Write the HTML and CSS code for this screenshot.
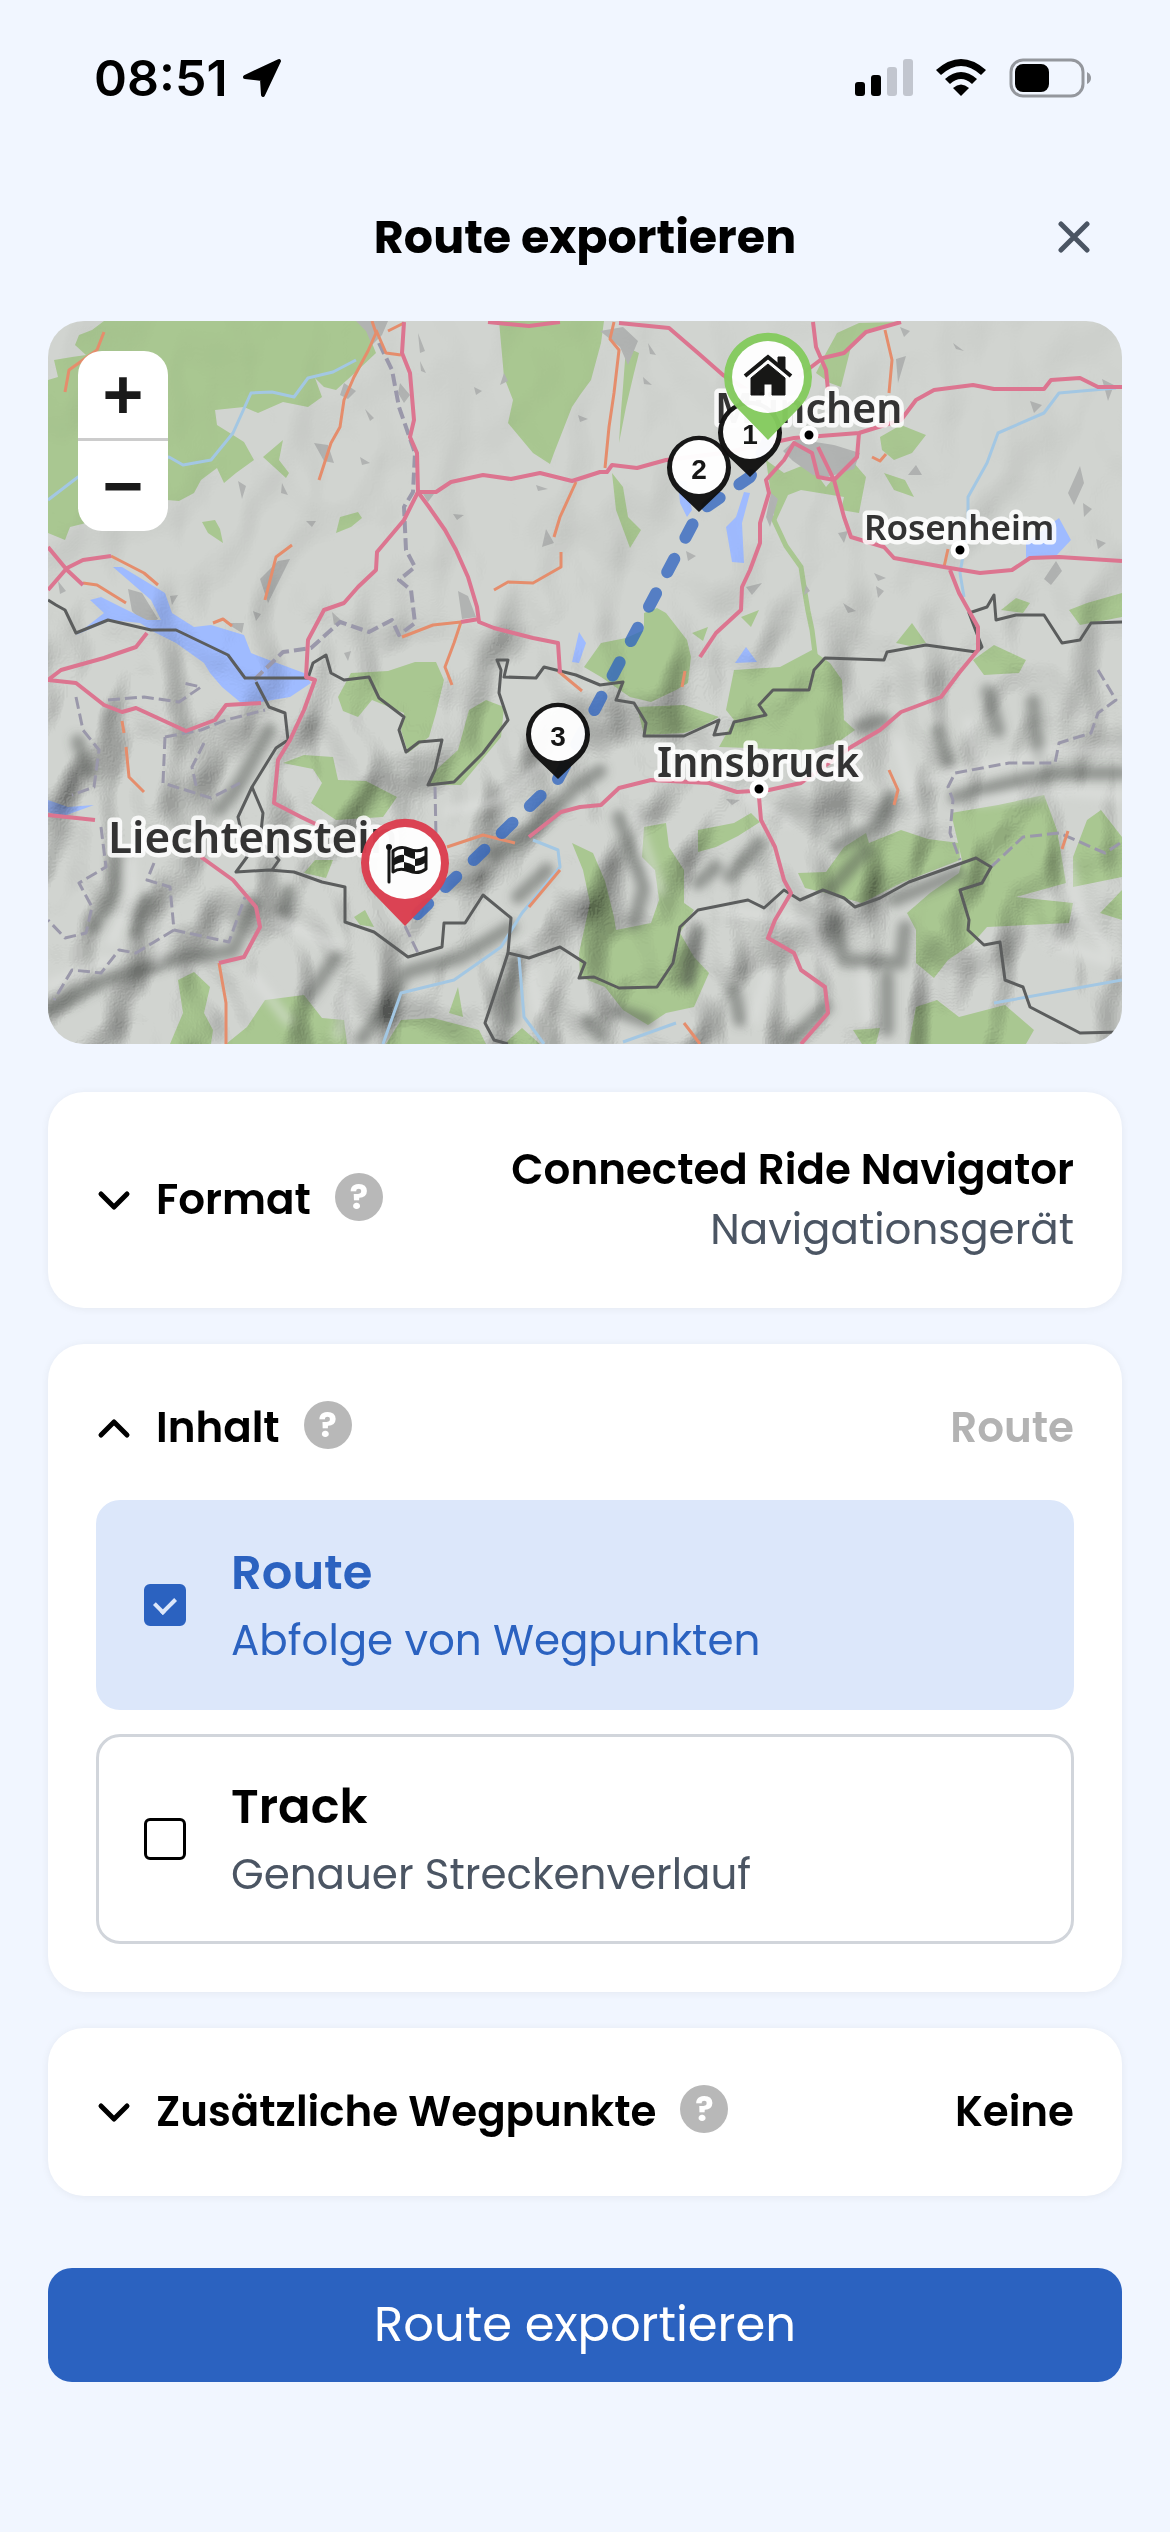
FILE: index.html
```html
<!DOCTYPE html>
<html lang="de">
<head>
    <meta charset="UTF-8">
    <meta name="viewport" content="width=device-width, initial-scale=1.0">
    <title>Route exportieren</title>
    <link rel="stylesheet" href="styles.css">
</head>
<body>
    <div class="status-bar">
        <div class="status-time">
            <span>08:51</span>
            <svg width="40" height="40" viewBox="0 0 40 40"><path d="M37 3 L21 37 L20 21 L3 19 Z" stroke="#000" stroke-width="4" stroke-linejoin="round"/></svg>
        </div>
        <div class="status-icons">
            <svg width="58" height="40" viewBox="0 0 58 40">
                <rect x="0" y="24" width="10" height="14" rx="3"/>
                <rect x="16" y="17" width="10" height="21" rx="3"/>
                <rect x="32" y="9" width="10" height="29" rx="3" fill="#c2c6cf"/>
                <rect x="48" y="1" width="10" height="37" rx="3" fill="#c2c6cf"/>
            </svg>
            <svg width="52" height="40" viewBox="0 0 52 40">
                <path d="M1 12 Q26 -10 51 12 L46 17 Q26 -1 6 17 Z"/>
                <path d="M10 21 Q26 7 42 21 L37 26 Q26 16 15 26 Z"/>
                <path d="M18 30 Q26 23 34 30 L26 38 Z"/>
            </svg>
            <svg width="83" height="40" viewBox="0 0 83 40">
                <rect x="2" y="2" width="72" height="36" rx="12" fill="none" stroke="#94979d" stroke-width="3"/>
                <rect x="6" y="6" width="34" height="28" rx="8"/>
                <path d="M78 14 Q82 16 82 20 Q82 24 78 26 Z" fill="#94979d"/>
            </svg>
        </div>
    </div>

    <div class="container">
        <header class="header">
            <h1>Route exportieren</h1>
            <button type="button" class="close" aria-label="Schließen">
                <svg width="32" height="32" viewBox="0 0 32 32"><path d="M3 3 L29 29 M29 3 L3 29" stroke="#4b5563" stroke-width="5" stroke-linecap="round"/></svg>
            </button>
        </header>

        <div class="map">
            <svg class="map-canvas" viewBox="0 0 1074 723">
                <defs>
                    <filter id="relief" x="0" y="0" width="100%" height="100%">
                        <feTurbulence type="fractalNoise" baseFrequency="0.015 0.010" numOctaves="2" seed="11"/>
                        <feColorMatrix values="0 0 0 0 0  0 0 0 0 0  0 0 0 0 0  1 0 0 0 0"/>
                        <feGaussianBlur stdDeviation="3"/>
                        <feDiffuseLighting surfaceScale="60" diffuseConstant="1.15" lighting-color="#ffffff">
                            <feDistantLight azimuth="225" elevation="60"/>
                        </feDiffuseLighting>
                    </filter>
                    <filter id="soft" x="-10%" y="-10%" width="120%" height="120%"><feGaussianBlur stdDeviation="5"/></filter>
                    <linearGradient id="fade" x1="0" y1="0" x2="0" y2="1">
                        <stop offset="0" stop-color="#fff" stop-opacity="0.04"/>
                        <stop offset="0.35" stop-color="#fff" stop-opacity="0.1"/>
                        <stop offset="0.55" stop-color="#fff" stop-opacity="0.5"/>
                        <stop offset="1" stop-color="#fff" stop-opacity="0.6"/>
                    </linearGradient>
                    <mask id="alps"><rect width="1074" height="723" fill="url(#fade)"/></mask>
                    <path id="pin-big" d="M0 63 L-31 31 A44 44 0 1 1 31 31 Z"/>
                    <path id="pin-small" d="M0 45 L-23 23 A32 32 0 1 1 23 23 Z"/>
                </defs>

                <rect width="1074" height="723" fill="#d1d4d0"/>

                <!-- Wald -->
                <g fill="#a9c791">
                    <path d="M56 0 L44 9 31 14 27 24 38 34 24 36 6 39 10 56 0 59 0 212 17 219 22 206 38 202 60 190 119 179 131 180 146 172 153 159 169 147 176 162 188 152 206 139 196 121 185 114 169 104 167 89 196 86 210 92 235 81 260 86 274 76 267 57 276 66 288 69 310 49 328 32 315 0Z"/>
                    <path d="M235 119 L215 136 226 146 238 157 241 152 231 139Z M154 201 L167 199 172 208 175 222 160 212Z M292 196 L310 191 314 197 303 206 288 212Z"/>
                    <path d="M451 0 L456 56 465 79 460 102 485 132 502 143 506 132 524 86 532 74 543 59 553 22 556 0Z"/>
                    <path d="M578 26 L591 32 586 52 578 86 571 122 573 90 575 66Z M564 152 L575 166 580 196 593 209 582 227 568 189Z"/>
                    <path d="M778 32 L789 12 811 2 850 1 818 9 803 26 793 66 782 62 768 52Z M832 116 L853 104 878 114 864 132 846 139 834 129Z M836 152 L857 159 866 176 846 169Z"/>
                    <path d="M718 139 L736 152 761 142 778 166 790 152 796 139 806 142 818 156 811 192 793 189 796 176 753 169 740 174 727 202 724 180Z"/>
                    <path d="M536 346 L553 322 578 317 596 309 596 292 609 287 618 292 639 319 643 336 640 362 628 369 603 381 582 376 553 356Z M589 386 L636 384 671 396 655 405 636 412 596 414Z"/>
                    <path d="M686 349 L732 346 764 329 782 342 794 359 796 399 807 409 789 422 761 429 671 426 686 399 678 389Z"/>
                    <path d="M693 296 L711 289 703 306Z M848 322 L864 302 878 322 862 325Z M925 339 L946 324 978 339 971 352 936 354Z M953 289 L968 277 982 282 975 292Z M1021 289 L1039 282 1074 272 1074 296 1032 304Z M644 312 L660 306 655 320Z"/>
                    <path d="M290 376 L303 352 340 350 367 341 388 341 396 359 388 392 381 416 360 432 353 409 356 392 324 379 310 396 295 390Z"/>
                    <path d="M421 389 L438 379 456 386 453 416 428 446 413 464 380 464 388 449 410 429Z M235 442 L256 434 285 436 290 459 318 460 349 476 335 496 288 499 263 482 274 462 265 448Z"/>
                    <path d="M267 539 L285 539 278 557 256 552Z M306 596 L317 589 326 606 312 604Z"/>
                    <path d="M130 659 L146 651 162 666 156 692 165 709 163 723 122 723 135 692Z M178 723 L199 706 217 679 256 674 274 697 296 699 299 723Z M401 692 L410 666 415 696Z M338 723 L353 699 385 697 431 709 438 723Z M456 723 L474 707 492 723Z"/>
                    <path d="M524 522 L545 532 557 560 566 596 568 609 603 602 611 579 607 549 594 536 596 506 618 502 621 526 636 549 636 582 646 589 632 612 646 636 661 652 646 686 618 692 600 704 575 689 557 666 532 656 531 632 542 582 535 549Z"/>
                    <path d="M650 509 L686 502 703 492 712 501 690 515 668 526 650 531Z M750 552 L778 551 796 526 818 512 821 522 853 509 880 518 911 522 912 539 853 562 814 582 778 572 757 567Z"/>
                    <path d="M903 492 L950 484 996 474 1009 509 1018 562 968 576 1025 582 1021 602 939 606 925 622 900 639 886 657 868 642 868 609 859 592 882 572 911 552 914 539Z"/>
                    <path d="M1025 536 L1039 499 1053 489 1074 516 1074 556 1025 566Z M1052 592 L1074 569 1074 599Z M861 723 L868 686 889 679 911 696 957 684 986 709 978 723Z M805 709 L832 707 828 723 814 723Z"/>
                </g>
                <path d="M724 195 L738 225 753 246 757 272 760 290 764 309 768 340" fill="none" stroke="#a9c791" stroke-width="5"/>

                <!-- Siedlungen -->
                <g fill="#b1b3b2">
                    <path d="M308 0 L340 0 334 14 324 24 318 10Z M370 12 L377 30 372 32Z M372 40 L378 52 373 50Z M352 62 L362 74 356 82 350 72Z M296 62 L308 70 300 78 292 74Z M317 88 L326 97 322 100Z M266 122 L280 124 286 142 276 140Z M312 136 L322 142 314 144Z M190 160 L198 165 194 178Z M234 162 L240 174 233 172Z M258 200 L268 200 264 206Z"/>
                    <path d="M426 66 L434 70 428 74Z M456 52 L460 60 452 64Z M530 94 L540 98 532 101Z M375 173 L386 173 380 181Z M488 164 L500 168 490 170Z M405 193 L416 194 409 199Z M498 208 L506 222 494 226Z M410 270 L420 275 428 296 414 298Z M230 240 L242 238 226 270 220 282 212 258Z M80 268 L94 272 110 298 98 304 84 290Z M178 302 L196 302 194 312Z M10 260 L18 270 12 273Z M122 275 L130 274 124 284Z M205 290 L213 293 208 300Z M284 291 L294 300 286 304Z M296 332 L303 330 300 340Z"/>
                    <path d="M552 10 L575 6 590 20 580 44 572 26Z M600 22 L608 34 602 33Z M595 56 L604 64 596 63Z M748 118 L786 124 812 132 806 148 780 156 765 154 745 140 735 130Z M848 38 L858 35 850 62Z M852 6 L862 10 856 16Z M905 22 L916 30 908 28Z M982 80 L994 84 986 92Z M1054 58 L1066 64 1060 80Z M1032 145 L1036 162 1026 184 1020 172Z M1035 182 L1044 188 1036 196Z M1048 218 L1058 222 1050 228Z M868 144 L874 154 860 154Z M790 212 L800 210 796 222Z M723 172 L730 178 722 206 718 196Z M698 266 L714 262 704 274Z M638 230 L648 235 640 240Z M758 264 L762 270 756 274Z M826 252 L838 257 830 260Z M828 265 L836 270 830 277Z M795 282 L808 290 800 292Z M1008 240 L1014 250 1003 264 996 258Z M678 478 L692 479 684 484Z"/>
                </g>

                <!-- Seen -->
                <g fill="#9fbbff">
                    <path d="M65 246 L74 246 117 272 124 292 146 306 163 304 196 314 203 332 221 339 256 352 263 362 242 376 213 381 192 381 174 366 162 352 156 342 128 322 106 311 92 302 63 299 28 314 56 292 42 279 53 276 99 299 113 299 103 279Z"/>
                    <path d="M696 171 L702 172 694 202 696 242 684 241 678 206 688 196Z M630 160 L638 160 644 189 639 196 632 182Z M978 222 L1011 197 1023 219 1007 236 978 237Z M687 342 L698 326 709 341Z M531 311 L538 322 531 342 524 341Z M0 479 L20 486 46 484 13 496 0 491Z"/>
                </g>

                <!-- Relief -->
                <g class="relief" mask="url(#alps)">
                    <rect x="-30" y="-30" width="1134" height="783" filter="url(#relief)"/>
                </g>
                <g fill="none" stroke="#4c4f4c" stroke-opacity="0.48" stroke-width="14" stroke-linecap="round" stroke-linejoin="round" filter="url(#soft)">
                    <path d="M0 689 L56 659 135 636 185 630 206 582 M69 536 L67 569 46 606 M99 579 L88 612 M221 409 L192 462 171 489 M288 636 L260 676 M463 606 L413 636 356 652 342 682 313 719"/>
                    <path d="M552 450 L528 466 488 506 405 562 M499 549 L470 576 M571 496 L596 566 586 602 M668 546 L650 562 M711 522 L682 556 M836 399 L811 406 M843 476 L828 506 789 526 M818 529 L782 569 M911 552 L846 579"/>
                    <path d="M907 476 L961 462 1003 452 1074 452 M786 599 L796 639 853 642 857 606 M686 669 L692 699 M839 656 L839 709 M778 686 L743 719 M466 640 L462 700 M650 610 L640 660 M600 700 L570 690 M240 570 L236 590 M540 700 L552 715 M30 420 L40 450 M940 370 L950 410 M890 410 L900 440 M985 380 L990 430"/>
                </g>
                <g fill="none" stroke="#e4e5e3" stroke-opacity="0.55" stroke-width="9" stroke-linecap="round" stroke-linejoin="round" filter="url(#soft)">
                    <path d="M82 540 L84 574 64 620 M120 600 L110 640 M0 665 L60 640 M228 600 L290 625 M205 655 L240 700 M300 670 L290 715 M380 570 L440 540 M480 620 L490 690 M400 490 L450 480 500 440 M585 490 L612 570"/>
                    <path d="M680 590 L760 600 780 650 M720 650 L705 700 M815 650 L820 700 M880 460 L1000 430 1074 430 M930 480 L1020 470 1074 475 M1000 620 L1060 640 M640 440 L740 500 M850 420 L870 500 M920 400 L930 440 M1020 540 L1030 590 1060 630"/>
                </g>

                <!-- Flüsse -->
                <g fill="none" stroke="#a3c7e3" stroke-width="3" stroke-linejoin="round">
                    <path d="M0 179 L30 156 121 136 135 144 163 139 185 112 203 72 224 71 246 76 260 57 285 51 308 39 M1068 67 L1011 72 996 92 950 112 939 142 920 176 920 206 912 252 916 276"/>
                    <path d="M335 723 L353 672 406 659 453 626 474 592 512 546 510 529 485 519 M471 636 L476 696 496 723 M575 721 L628 702 M946 682 L1074 659"/>
                </g>

                <!-- Landesgrenzen und Bezirke -->
                <g fill="none" stroke="#9a98aa" stroke-width="3" stroke-dasharray="12 5" stroke-linejoin="round">
                    <path d="M331 22 L344 49 351 86 367 132 365 171 356 186 358 229 367 246 351 259 363 269 367 302 351 314 344 299 321 311 292 301 263 327 235 331 206 359" stroke-width="4"/>
                    <path d="M28 376 L35 409 51 429 46 466 24 474 M117 416 L115 462 163 477 192 462 M117 416 L153 409 178 399 217 389 M156 422 L144 446 149 469 M60 379 L96 376 131 381 153 366 135 362"/>
                    <path d="M53 506 L58 546 31 562 44 586 38 612 17 617 0 599 M106 542 L99 559 122 566 126 609 181 621 197 576 M126 609 L88 632 71 629 53 652 24 649 6 679"/>
                    <path d="M1050 349 L1068 379 1050 392 1043 412 1011 422 1007 442 961 442 907 452 900 466 905 479 902 512 912 539 M943 546 L975 516 1011 512 1057 532 1074 521 M387 466 L388 516 M357 605 L370 632"/>
                </g>
                <g fill="none" stroke="#5b5d5d" stroke-width="3" stroke-linejoin="round">
                    <path d="M0 279 L8 284 17 289 28 312 60 299 103 309 128 309 180 334 197 357 260 357 265 342 278 334 283 352 296 359 321 356 331 377 356 396 351 409 358 431 371 421 394 419 387 449 380 464 406 461 435 432 460 399 451 372 453 349 449 339 460 339 456 356 488 357 496 346 528 354 552 364 575 361 568 379 586 382 598 402 596 415 636 415 671 399 666 414 682 412 686 401 718 394 711 384 725 369 761 369 766 349 777 337 836 339 839 331 878 324 928 331 934 326 921 292 939 286 946 274 948 299 968 294 996 294 1014 322 1032 319 1043 302 1074 301"/>
                    <path d="M208 361 L221 386 237 392 240 419 228 427 204 466 190 496 199 536 188 551 221 549 246 551 274 561 297 566 297 601 326 611 360 636 394 626 396 602 417 602 435 574 463 597 460 632 481 637 512 626 537 642 531 657 546 656 571 667 609 666 625 642 632 606 650 589 700 579 716 587 736 569 752 579 775 569 796 577 807 586 832 577 861 561 928 537 943 546 934 562 912 569 921 599 920 609 936 624 952 621 957 659 975 666 982 686 1032 712 1074 711"/>
                    <path d="M460 632 L449 666 437 702 446 719 460 723 M204 466 L215 492 212 520 231 539 224 549"/>
                </g>

                <!-- Straßen -->
                <g fill="none" stroke="#e58d6c" stroke-width="3" stroke-linejoin="round">
                    <path d="M56 11 L49 29 21 49 17 71 M324 0 L328 12 320 30 306 56 296 79 292 106 283 122 271 159 M328 9 L338 32 353 34 M356 2 L340 10 M244 224 L228 236 217 279 M63 235 L96 252 110 264 M35 262 L49 264 78 282 M528 161 L512 196 506 216 M513 231 L513 246 485 262 460 261 446 269 M354 316 L385 304 413 301 406 322 397 346 404 364"/>
                    <path d="M566 1 L562 18 571 29 566 72 561 106 557 147 M837 9 L844 39 841 72 M841 449 L850 469 846 484 M636 702 L652 723 M171 642 L178 682 178 723 M78 426 L81 456 96 471 M74 400 L76 412 M399 526 L435 514 467 522 M512 549 L481 586 M165 302 L175 298 184 305 M824 136 L832 140 838 133 M510 350 L534 370 M896 246 L900 228 M637 350 L634 366 M1020 510 L1014 528"/>
                </g>
                <g fill="none" stroke="#dc7590" stroke-width="4" stroke-linejoin="round">
                    <path d="M356 1 L354 32 362 52 366 99 362 116 369 132 370 171 381 186 397 209 408 229 420 256 429 286 431 301 446 307 485 317 510 322 512 352 M413 301 L431 298"/>
                    <path d="M370 171 L356 199 329 231 328 249 310 266 296 282 276 289 260 319 258 356 267 359 256 389 242 419 230 439 226 482 253 496 274 506"/>
                    <path d="M370 171 L388 171 403 161 435 154 463 158 492 152 524 160 552 151 559 151 564 144 589 147 618 139 675 132 746 117 811 112 853 99 868 79 886 69 925 64 946 68 996 68 1003 59 1032 57 1050 66 1074 66"/>
                    <path d="M571 2 L621 7 650 32 675 54 732 89 M765 1 L768 26 778 49 780 69 M853 1 L818 11 796 32 775 37 750 56 M440 1 L481 5 512 1"/>
                    <path d="M811 112 L809 136 786 159 770 156 764 132 746 122 736 139 718 159 721 172 712 202 712 222 702 249 694 266 693 289 668 312 652 336 M770 126 L786 159 796 196 803 216 836 226 846 237 896 246 932 252 964 249 982 237 1011 236 1074 240"/>
                    <path d="M902 249 L911 272 930 306 930 329 911 352 893 376 853 391 832 409 803 426 753 462 721 469 689 471 661 462 603 459 571 467 553 484 532 486 513 491 481 516"/>
                    <path d="M711 476 L713 499 727 526 736 559 743 572 727 599 720 617 746 632 753 649 777 666 780 692 753 723"/>
                    <path d="M0 226 L19 249 35 264 M0 269 L19 247 35 239 63 235 M99 312 L88 326 56 337 13 349 0 359 28 362 56 384 74 391 88 387 138 410 167 399 178 384 213 382 M0 494 L47 499 M153 536 L185 559 208 586 212 606 196 636 171 642"/>
                </g>

                <!-- Orte -->
                <g class="places">
                    <text class="city" x="667" y="102">München</text>
                    <text class="town" x="816" y="219">Rosenheim</text>
                    <text class="city" x="609" y="456">Innsbruck</text>
                    <text class="state" x="60" y="532">Liechtenstein</text>
                </g>
                <g stroke="#fff" stroke-width="5">
                    <circle cx="761" cy="114" r="7"/>
                    <circle cx="912" cy="229" r="7"/>
                    <circle cx="711" cy="468" r="7"/>
                </g>

                <!-- Route -->
                <path d="M720 119 L702 156 651 191 510 458 357 605" fill="none" stroke="#2b62c0" stroke-opacity="0.75" stroke-width="12" stroke-linecap="round" stroke-linejoin="round" stroke-dasharray="15 24"/>

                <!-- Wegpunkte -->
                <g class="pin" transform="translate(510 413)">
                    <use href="#pin-small" fill="#111"/><circle r="27" fill="#fff"/><text y="12">3</text>
                </g>
                <g class="pin" transform="translate(702 111)">
                    <use href="#pin-small" fill="#111"/><circle r="27" fill="#fff"/><text y="12">1</text>
                </g>
                <g class="pin" transform="translate(651 146)">
                    <use href="#pin-small" fill="#111"/><circle r="27" fill="#fff"/><text y="12">2</text>
                </g>
                <g class="pin" transform="translate(357 542)">
                    <use href="#pin-big" fill="#dc3f50"/><circle r="36" fill="#fff"/>
                    <path d="M-16 -14 V19" stroke="#111" stroke-width="3" stroke-linecap="round"/>
                    <circle cx="-16" cy="-16" r="3"/>
                    <path d="M-12 -12 Q-5 -18 4 -14 Q13 -10 21 -15 V6 Q13 12 4 8 Q-5 4 -12 9 Z" fill="#fff" stroke="#111" stroke-width="3" stroke-linejoin="round"/>
                    <path d="M-1 -15 Q5 -15 10 -12 V-4 Q5 -5 -1 -8 Z M-12 -4 Q-6 -9 -1 -8 V-1 Q-6 -1 -12 3 Z M10 -4 Q16 -5 21 -8 V-1 Q16 3 10 3 Z M-1 -1 Q5 0 10 3 V9 Q4 8 -1 6 Z"/>
                </g>
                <g class="pin" transform="translate(720 56)">
                    <use href="#pin-big" fill="#85cb5f"/><circle r="36" fill="#fff"/>
                    <path d="M-23 -1 L0 -20 L23 -1" fill="none" stroke="#111" stroke-width="4"/>
                    <path d="M10 -20 H17 V-5 L10 -11 Z M0 -13 L17 1 V18 H4 V7 H-4 V18 H-17 V1 Z" stroke="#111" stroke-width="1" stroke-linejoin="round"/>
                </g>
            </svg>
            <div class="zoom">
                <button type="button" aria-label="Vergrößern">+</button>
                <button type="button" aria-label="Verkleinern">−</button>
            </div>
        </div>

        <form class="settings">
            <section class="card">
                <div class="card-head">
                    <button type="button" class="toggle" aria-expanded="false">
                        <svg width="36" height="24" viewBox="0 0 36 24"><path d="M5 6 L18 19 L31 6"/></svg>
                        Format
                    </button>
                    <button type="button" class="help" aria-label="Hilfe zu Format">?</button>
                    <div class="value">Connected Ride Navigator<small>Navigationsgerät</small></div>
                </div>
            </section>

            <section class="card">
                <div class="card-head">
                    <button type="button" class="toggle" aria-expanded="true">
                        <svg width="36" height="24" viewBox="0 0 36 24"><path d="M5 19 L18 6 L31 19"/></svg>
                        Inhalt
                    </button>
                    <button type="button" class="help" aria-label="Hilfe zu Inhalt">?</button>
                    <div class="value muted">Route</div>
                </div>
                <div class="options">
                    <label class="option" for="route">
                        <input type="checkbox" id="route" checked>
                        <span class="option-text"><strong>Route</strong><span>Abfolge von Wegpunkten</span></span>
                    </label>
                    <label class="option" for="track">
                        <input type="checkbox" id="track">
                        <span class="option-text"><strong>Track</strong><span>Genauer Streckenverlauf</span></span>
                    </label>
                </div>
            </section>

            <section class="card">
                <div class="card-head">
                    <button type="button" class="toggle" aria-expanded="false">
                        <svg width="36" height="24" viewBox="0 0 36 24"><path d="M5 6 L18 19 L31 6"/></svg>
                        Zusätzliche Wegpunkte
                    </button>
                    <button type="button" class="help" aria-label="Hilfe zu Zusätzliche Wegpunkte">?</button>
                    <div class="value">Keine</div>
                </div>
            </section>

            <button type="submit" class="submit">Route exportieren</button>
        </form>
    </div>
</body>
</html>
```
FILE: styles.css
```css
* {
    box-sizing: border-box;
}
body {
    margin: 0;
    background: #f1f6ff;
    color: #000;
    font-family: 'Poppins', 'Inter', sans-serif;
    font-size: 42px;
    line-height: 60px;
}
button {
    margin: 0;
    padding: 0;
    border: none;
    background: none;
    color: inherit;
    font: inherit;
    cursor: pointer;
}
svg {
    display: block;
}

/* Statusleiste */
.status-bar {
    display: flex;
    justify-content: space-between;
    align-items: center;
    height: 141px;
    padding: 15px 78px 0 94px;
}
.status-time, .status-icons {
    display: flex;
    align-items: center;
}
.status-time {
    gap: 14px;
    font-family: 'Inter', sans-serif;
    font-size: 50px;
    font-weight: 600;
}
.status-icons {
    gap: 22px;
}

.container {
    padding: 0 48px 48px;
}
.header {
    display: grid;
    grid-template-columns: 1fr auto 1fr;
    align-items: center;
    padding: 60px 0 48px;
}
.header h1 {
    grid-column: 2;
    margin: 0;
    font-size: 46px;
    font-weight: 700;
    line-height: 72px;
}
.close {
    display: flex;
    justify-content: center;
    align-items: center;
    justify-self: end;
    width: 96px;
    height: 72px;
}

/* Karte */
.map {
    position: relative;
    border-radius: 36px;
    overflow: hidden;
}
.map-canvas {
    width: 100%;
    height: auto;
}
.relief {
    mix-blend-mode: multiply;
}
.places {
    font-family: 'Noto Sans', sans-serif;
    font-weight: 600;
    fill: #333;
    stroke: #fff;
    stroke-opacity: 0.85;
    stroke-width: 9px;
    stroke-linejoin: round;
    paint-order: stroke;
}
.city {
    font-size: 41px;
}
.town {
    font-size: 35px;
}
.state {
    font-size: 44px;
}
.pin {
    opacity: 0.97;
    fill: #111;
    font-family: 'Liberation Sans', sans-serif;
    font-size: 28px;
    font-weight: 700;
    text-anchor: middle;
}
.zoom {
    position: absolute;
    top: 30px;
    left: 30px;
    display: flex;
    flex-direction: column;
    border-radius: 24px;
    background: #fff;
    overflow: hidden;
}
.zoom button {
    width: 90px;
    height: 90px;
    color: #1a1a1a;
    font-family: 'Liberation Sans', sans-serif;
    font-size: 70px;
    font-weight: 700;
    line-height: 84px;
}
.zoom button:first-child {
    border-bottom: 3px solid #ccc;
}

/* Einstellungen */
.settings {
    display: flex;
    flex-direction: column;
    gap: 36px;
    margin-top: 48px;
}
.card {
    padding: 48px;
    border-radius: 36px;
    background: #fff;
    box-shadow: 0 1px 8px rgba(0, 0, 0, 0.06);
}
.card-head {
    display: flex;
    align-items: center;
    gap: 24px;
    min-height: 72px;
}
.toggle {
    display: flex;
    align-items: center;
    gap: 24px;
    font-weight: 600;
}
.toggle svg {
    fill: none;
    stroke: #000;
    stroke-width: 5px;
    stroke-linecap: round;
    stroke-linejoin: round;
}
.help {
    width: 48px;
    height: 48px;
    margin-bottom: 6px;
    border-radius: 50%;
    background: #b8b8b8;
    color: #fff;
    font-size: 34px;
    font-weight: 700;
    line-height: 48px;
}
.value {
    margin-left: auto;
    font-weight: 600;
    text-align: right;
}
.value small {
    display: block;
    color: #4b5563;
    font-size: 42px;
    font-weight: 400;
}
.muted {
    color: #b3b3b3;
}
.options {
    display: flex;
    flex-direction: column;
    gap: 24px;
    margin-top: 36px;
}
.option {
    display: flex;
    align-items: center;
    gap: 45px;
    padding: 36px 45px;
    border: 3px solid #d1d5db;
    border-radius: 24px;
    color: #4b5563;
    cursor: pointer;
}
.option-text {
    display: flex;
    flex-direction: column;
    gap: 4px;
}
.option strong {
    color: #000;
    font-size: 48px;
    font-weight: 600;
    line-height: 68px;
}
.option input {
    display: flex;
    justify-content: center;
    align-items: center;
    width: 42px;
    height: 42px;
    margin: 0;
    border: 3px solid #000;
    border-radius: 6px;
    appearance: none;
}
.option input:checked {
    border-color: #2b62c0;
    background: #2b62c0;
}
.option input:checked::before {
    content: '';
    width: 10px;
    height: 16px;
    margin-bottom: 5px;
    border: solid #dce7fa;
    border-width: 0 4px 4px 0;
    transform: rotate(45deg);
}
.option:has(input:checked) {
    border-color: #dce7fa;
    background: #dce7fa;
}
.option:has(input:checked), .option:has(input:checked) strong {
    color: #2b62c0;
}
.submit {
    height: 114px;
    margin-top: 36px;
    border-radius: 24px;
    background: #2b62c0;
    color: #fff;
    font-size: 48px;
}
```
